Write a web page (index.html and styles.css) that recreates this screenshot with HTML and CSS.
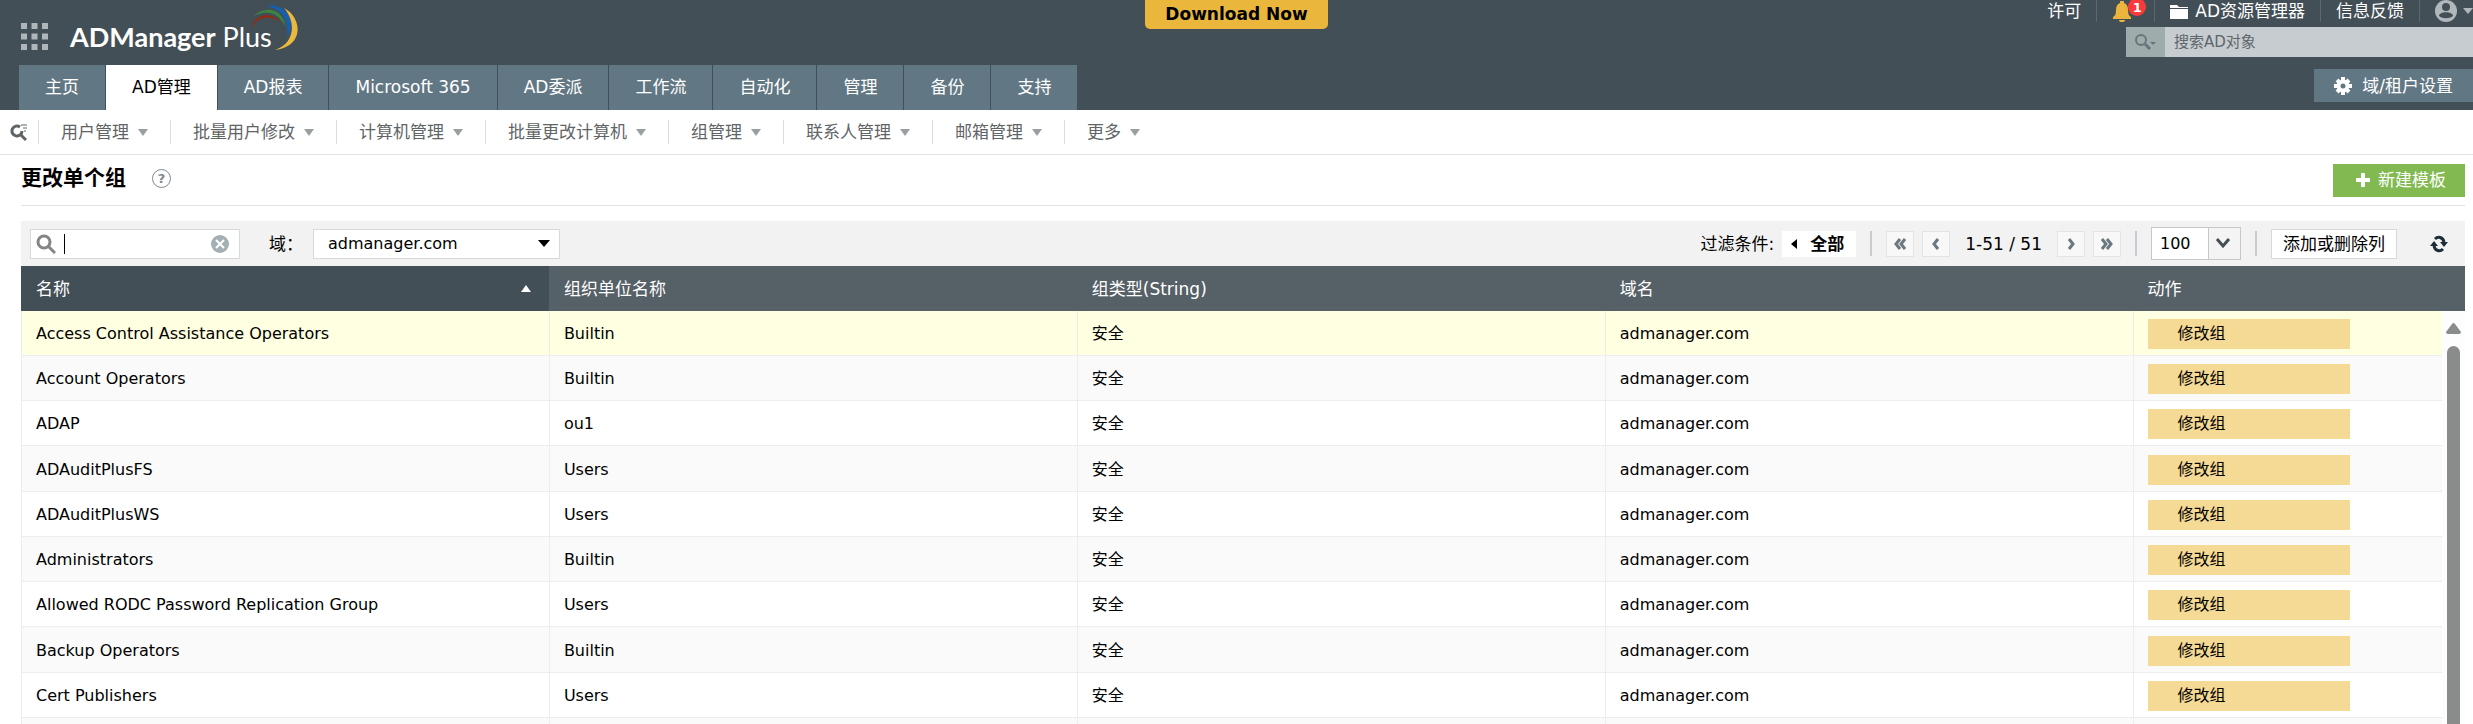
FILE: index.html
```html
<!DOCTYPE html>
<html lang="zh-CN">
    <head>
        <meta charset="UTF-8">
        <title>ADManager Plus</title>
        <link rel="stylesheet" href="styles.css">
    </head>

    <body>
        <header class="header">
            <div class="header-left">
                <div class="brand">
                    <button class="apps" aria-label="Apps">
                        <svg width="27" height="27" viewBox="0 0 27 27" fill="#aeb6b9">
                            <path d="M0 0h6v6H0zM10.500 0h6v6h-6zM21 0h6v6h-6zM0 10.500h6v6H0zM10.500 10.500h6v6h-6zM21 10.500h6v6h-6zM0 21h6v6H0zM10.500 21h6v6h-6zM21 21h6v6h-6z"/>
                        </svg>
                    </button>
                    <a class="logo" href="#"><b>ADManager</b> Plus
                        <svg class="swoosh" width="48" height="46" viewBox="0 0 48 46">
                            <path d="M0 23C3 11 19 4 30 18C19 9 8 12 2 20Z" fill="#98280f"/>
                            <path d="M3 11C13 1 31 2 35 22C27 7 16 4 3 11Z" fill="#3b8640"/>
                            <path d="M16 1C31-2 48 13 36 33C38 16 33 5 16 1Z" fill="#1560b0"/>
                            <path d="M33 3C52 13 53 42 24 45C43 39 46 18 33 3Z" fill="#ebb840"/>
                        </svg>
                    </a>
                </div>
                <nav class="tabs">
                    <a href="#">主页</a>
                    <a href="#" class="active">AD管理</a>
                    <a href="#">AD报表</a>
                    <a href="#">Microsoft 365</a>
                    <a href="#">AD委派</a>
                    <a href="#">工作流</a>
                    <a href="#">自动化</a>
                    <a href="#">管理</a>
                    <a href="#">备份</a>
                    <a href="#">支持</a>
                </nav>
            </div>

            <a class="download" href="#">Download Now</a>

            <div class="header-right">
                <div class="links">
                    <a href="#">许可</a>
                    <a href="#" class="bell" aria-label="Notifications">
                        <svg width="20" height="21" viewBox="0 0 20 21" fill="#ebb43c">
                            <path d="M8 0h4v2c3 1 4 4 4 7 0 4 1 6 3 7v2H1v-2c2-1 3-3 3-7 0-3 1-6 4-7zM7 19h6c0 3-6 3-6 0z"/>
                        </svg>
                        <span class="badge">1</span>
                    </a>
                    <a href="#">
                        <svg width="18" height="15" viewBox="0 0 18 15" fill="#fff">
                            <path d="M0 1h7l2 2h9v1H0zM0 5h18v10H0z"/>
                        </svg>
                        AD资源管理器
                    </a>
                    <a href="#">信息反馈</a>
                    <a href="#" class="user" aria-label="Account">
                        <svg width="22" height="22" viewBox="0 0 22 22">
                            <circle cx="11" cy="11" r="11" fill="#b1b8bc"/>
                            <circle cx="11" cy="7" r="4" fill="#434f57"/>
                            <path d="M4 16c0-5 14-5 14 0-4 3-10 3-14 0z" fill="#434f57"/>
                        </svg>
                        <svg width="10" height="6" viewBox="0 0 10 6" fill="#b1b8bc"><path d="M0 0h10L5 6z"/></svg>
                    </a>
                </div>
                <div class="object-search">
                    <button aria-label="Search type">
                        <svg width="22" height="16" viewBox="0 0 22 16" fill="none" stroke="#67757a" stroke-width="2">
                            <circle cx="6" cy="6" r="5"/>
                            <path d="M10 10l5 5" stroke-width="3"/>
                            <path d="M15 8h6l-3 3z" fill="#67757a" stroke="none"/>
                        </svg>
                    </button>
                    <input type="text" placeholder="搜索AD对象" aria-label="搜索AD对象">
                </div>
                <button class="settings">
                    <svg width="18" height="18" viewBox="0 0 18 18">
                        <circle cx="9" cy="9" r="4.500" fill="none" stroke="#fff" stroke-width="4"/>
                        <path d="M9 0v4M9 14v4M0 9h4M14 9h4M3 3l2 2M13 13l2 2M15 3l-2 2M5 13l-2 2" stroke="#fff" stroke-width="4"/>
                    </svg>
                    域/租户设置
                </button>
            </div>
        </header>

        <nav class="subnav">
            <a href="#" class="find" aria-label="Find">
                <svg width="17" height="17" viewBox="0 0 17 17" fill="none" stroke="#5f6466">
                    <path d="M10 3a5 5 0 1 0 2 4" stroke-width="3"/>
                    <path d="M10 10l6 6" stroke-width="3"/>
                    <path d="M11 1h6M13 4h4M14 7h2" stroke-width="1"/>
                </svg>
            </a>
            <a href="#">用户管理<i class="caret"></i></a>
            <a href="#">批量用户修改<i class="caret"></i></a>
            <a href="#">计算机管理<i class="caret"></i></a>
            <a href="#">批量更改计算机<i class="caret"></i></a>
            <a href="#">组管理<i class="caret"></i></a>
            <a href="#">联系人管理<i class="caret"></i></a>
            <a href="#">邮箱管理<i class="caret"></i></a>
            <a href="#">更多<i class="caret"></i></a>
        </nav>

        <main class="content">
            <div class="title-bar">
                <h1>更改单个组</h1>
                <a href="#" class="help" aria-label="Help">?</a>
                <button class="new-template">
                    <svg width="14" height="14" viewBox="0 0 14 14" fill="#fff"><path d="M5 0h4v5h5v4H9v5H5V9H0V5h5z"/></svg>
                    新建模板
                </button>
            </div>

            <div class="toolbar">
                <div class="search-box">
                    <svg width="20" height="20" viewBox="0 0 20 20" fill="none" stroke="#858585" stroke-width="3">
                        <circle cx="8" cy="8" r="6"/>
                        <path d="M12 12l7 7"/>
                    </svg>
                    <span class="cursor"></span>
                    <input type="text" aria-label="搜索">
                    <button aria-label="Clear">
                        <svg width="18" height="18" viewBox="0 0 18 18">
                            <circle cx="9" cy="9" r="9" fill="#a4b0b3"/>
                            <path d="M5 5l8 8M13 5l-8 8" stroke="#fff" stroke-width="2"/>
                        </svg>
                    </button>
                </div>
                <label class="domain-label" for="domain">域：</label>
                <select class="domain" id="domain">
                    <option>admanager.com</option>
                </select>

                <div class="toolbar-right">
                    <span>过滤条件:</span>
                    <button class="filter">
                        <svg width="6" height="10" viewBox="0 0 6 10"><path d="M6 0v10L0 5z"/></svg>
                        全部
                    </button>
                    <span class="divider"></span>
                    <div class="pager">
                        <button aria-label="First"><svg width="12" height="12" viewBox="0 0 12 12"><path d="M6 1L2 6l4 5M11 1L7 6l4 5"/></svg></button>
                        <button aria-label="Previous"><svg width="12" height="12" viewBox="0 0 12 12"><path d="M8 1L4 6l4 5"/></svg></button>
                        <span>1-51 / 51</span>
                        <button aria-label="Next"><svg width="12" height="12" viewBox="0 0 12 12"><path d="M4 1l4 5-4 5"/></svg></button>
                        <button aria-label="Last"><svg width="12" height="12" viewBox="0 0 12 12"><path d="M1 1l4 5-4 5M6 1l4 5-4 5"/></svg></button>
                    </div>
                    <span class="divider"></span>
                    <select class="page-size" aria-label="Page size">
                        <option>100</option>
                    </select>
                    <span class="divider"></span>
                    <button class="columns-button">添加或删除列</button>
                    <button class="refresh" aria-label="Refresh">
                        <svg width="18" height="18" viewBox="0 0 18 18">
                            <path d="M5 4c3-3 8-2 9 3M13 14c-3 3-8 2-9-3" fill="none" stroke="#1d2d38" stroke-width="3"/>
                            <path d="M10 7h8l-4 5zM0 11h8L4 6z" fill="#1d2d38"/>
                        </svg>
                    </button>
                </div>
            </div>

            <div class="table-wrap">
                <table>
                    <thead>
                        <tr>
                            <th class="sorted">名称</th>
                            <th>组织单位名称</th>
                            <th>组类型(String)</th>
                            <th>域名</th>
                            <th class="action">动作</th>
                        </tr>
                    </thead>
                    <tbody>
                        <tr class="hover"><td>Access Control Assistance Operators</td><td>Builtin</td><td>安全</td><td>admanager.com</td><td class="action"><button>修改组</button></td></tr>
                        <tr><td>Account Operators</td><td>Builtin</td><td>安全</td><td>admanager.com</td><td class="action"><button>修改组</button></td></tr>
                        <tr><td>ADAP</td><td>ou1</td><td>安全</td><td>admanager.com</td><td class="action"><button>修改组</button></td></tr>
                        <tr><td>ADAuditPlusFS</td><td>Users</td><td>安全</td><td>admanager.com</td><td class="action"><button>修改组</button></td></tr>
                        <tr><td>ADAuditPlusWS</td><td>Users</td><td>安全</td><td>admanager.com</td><td class="action"><button>修改组</button></td></tr>
                        <tr><td>Administrators</td><td>Builtin</td><td>安全</td><td>admanager.com</td><td class="action"><button>修改组</button></td></tr>
                        <tr><td>Allowed RODC Password Replication Group</td><td>Users</td><td>安全</td><td>admanager.com</td><td class="action"><button>修改组</button></td></tr>
                        <tr><td>Backup Operators</td><td>Builtin</td><td>安全</td><td>admanager.com</td><td class="action"><button>修改组</button></td></tr>
                        <tr><td>Cert Publishers</td><td>Users</td><td>安全</td><td>admanager.com</td><td class="action"><button>修改组</button></td></tr>
                        <tr><td></td><td></td><td></td><td></td><td class="action"></td></tr>
                    </tbody>
                </table>
                <div class="scrollbar">
                    <svg width="15" height="11" viewBox="0 0 15 11" fill="#8a8c8b"><path d="M6 1q1.500-2 3 0l6 8q0 2-2 2H2q-2 0-2-2z"/></svg>
                    <div class="thumb"></div>
                </div>
            </div>
        </main>
    </body>
</html>
```
FILE: styles.css
```css
* {
    box-sizing: border-box;
}
body {
    margin: 0;
    height: 100vh;
    display: flex;
    flex-direction: column;
    overflow: hidden;
    background: #fff;
    color: #000;
    font-family: "DejaVu Sans", "Noto Sans CJK SC", sans-serif;
    font-size: 17px;
    line-height: 24px;
}
a {
    color: inherit;
    text-decoration: none;
}
button, input, select {
    font: inherit;
    color: inherit;
    border: 0;
    padding: 0;
    margin: 0;
    background: none;
    border-radius: 0;
}
button {
    display: flex;
    align-items: center;
    cursor: pointer;
    white-space: nowrap;
}
input {
    outline: none;
    min-width: 0;
}
svg {
    flex: none;
}

/* Header */
.header {
    display: grid;
    grid-template-columns: 1fr auto 1fr;
    align-items: start;
    background: #434f57;
    color: #fff;
}
.brand {
    display: flex;
    height: 65px;
    padding: 8px 21px 0;
    align-items: center;
    gap: 22px;
}
.logo {
    position: relative;
    font-family: Lato, sans-serif;
    font-size: 27px;
    white-space: nowrap;
}
.swoosh {
    position: absolute;
    left: 181px;
    top: -20px;
}
.tabs {
    display: flex;
    padding-left: 19px;
}
.tabs a {
    padding: 0 26px;
    line-height: 45px;
    background: #627784;
    border-right: 1px solid #434f57;
    white-space: nowrap;
}
.tabs .active {
    background: #fff;
    color: #000;
}
.download {
    padding: 2px 20px 3px;
    background: #eab73c;
    color: #000;
    font-weight: bold;
    border-radius: 0 0 5px 5px;
}
.header-right {
    display: flex;
    flex-direction: column;
    align-items: flex-end;
}
.links {
    display: flex;
    height: 22px;
    margin-bottom: 5px;
}
.links a {
    display: flex;
    align-items: center;
    gap: 7px;
    padding: 0 15px;
    border-left: 1px solid #5c676e;
    white-space: nowrap;
}
.links a:first-child {
    border-left: 0;
}
.links .bell {
    position: relative;
    padding-right: 22px;
}
.badge {
    position: absolute;
    left: 31px;
    top: -2px;
    width: 18px;
    height: 18px;
    border-radius: 50%;
    background: #f93a3a;
    font-size: 13px;
    font-weight: bold;
    line-height: 19px;
    text-align: center;
}
.links .user {
    gap: 6px;
    padding-right: 0;
}
.object-search {
    display: flex;
    width: 347px;
    height: 30px;
    background: #c7ccd1;
}
.object-search button {
    width: 39px;
    justify-content: center;
    background: #9eadac;
}
.object-search input {
    flex: 1;
    padding-left: 9px;
    font-size: 15px;
}
.object-search input::placeholder {
    color: #5f666b;
}
.settings {
    gap: 10px;
    height: 33px;
    margin-top: 12px;
    padding: 0 20px;
    background: #627784;
}

/* Sub navigation */
.subnav {
    display: flex;
    align-items: center;
    height: 45px;
    border-bottom: 1px solid #e3e3e3;
    color: #5f6466;
}
.subnav a {
    display: flex;
    align-items: center;
    gap: 9px;
    padding: 0 22px;
    border-left: 1px solid #ddd;
    white-space: nowrap;
}
.subnav .find {
    padding: 0 11px 0 10px;
    border: 0;
}
.caret {
    border: 5px solid transparent;
    border-top: 7px solid #999ea1;
    border-bottom: 0;
}

/* Page title */
.content {
    flex: 1;
    min-height: 0;
    display: flex;
    flex-direction: column;
    padding: 0 8px 0 21px;
}
.title-bar {
    display: flex;
    align-items: center;
    height: 51px;
    margin-bottom: 15px;
    border-bottom: 1px solid #e3e3e3;
}
h1 {
    margin: 0;
    padding-bottom: 4px;
    font-size: 21px;
}
.help {
    width: 19px;
    height: 19px;
    margin-left: 26px;
    margin-bottom: 4px;
    border: 1px solid #7f888c;
    border-radius: 50%;
    color: #7f888c;
    font-size: 13px;
    font-weight: bold;
    line-height: 17px;
    text-align: center;
}
.new-template {
    gap: 8px;
    height: 33px;
    margin-left: auto;
    padding: 0 19px 0 23px;
    background: #82ba51;
    color: #fff;
}

/* Toolbar */
.toolbar {
    display: flex;
    align-items: center;
    height: 45px;
    padding: 0 9px;
    background: #f2f2f2;
}
.search-box {
    display: flex;
    align-items: center;
    width: 210px;
    height: 30px;
    padding: 0 10px 0 5px;
    border: 1px solid #d6dada;
    background: #fff;
}
.search-box input {
    flex: 1;
}
.cursor {
    width: 1px;
    height: 20px;
    margin-left: 8px;
    background: #000;
}
.domain-label {
    width: 44px;
    margin-left: 29px;
    white-space: nowrap;
}
.domain, .page-size {
    appearance: none;
    cursor: pointer;
    background-color: #fff;
    background-repeat: no-repeat;
}
.domain {
    width: 247px;
    height: 30px;
    padding: 0 14px;
    border: 1px solid #d6dada;
    font-size: 16px;
    background-image: url("data:image/svg+xml,%3Csvg xmlns='http://www.w3.org/2000/svg' width='12' height='7'%3E%3Cpath d='M0 0h12L6 7z'/%3E%3C/svg%3E");
    background-position: right 9px center;
}
.toolbar-right {
    display: flex;
    align-items: center;
    margin-left: auto;
    padding-right: 8px;
    white-space: nowrap;
}
.filter {
    gap: 13px;
    height: 26px;
    margin-left: 8px;
    padding: 0 12px 0 9px;
    background: #fff;
    font-weight: bold;
}
.divider {
    width: 2px;
    height: 25px;
    margin: 0 14px;
    background: #c6ccd1;
}
.pager {
    display: flex;
    align-items: center;
    gap: 8px;
}
.pager button {
    width: 28px;
    height: 26px;
    justify-content: center;
    border: 1px solid #e4e4e4;
    background: #f8f8f8;
}
.pager svg {
    fill: none;
    stroke: #6b7880;
    stroke-width: 3;
}
.pager span {
    padding: 0 7px;
}
.page-size {
    width: 90px;
    height: 33px;
    padding: 0 8px;
    border: 1px solid #c3c8ca;
    font-size: 16px;
    background-image: url("data:image/svg+xml,%3Csvg xmlns='http://www.w3.org/2000/svg' width='32' height='31'%3E%3Cpath d='M0 0h32v31H0z' fill='%23f4f4f4'/%3E%3Cpath d='M0 0v31' stroke='%23c3c8ca' stroke-width='2'/%3E%3Cpath d='M9 11l6 7 6-7' fill='none' stroke='%23434f57' stroke-width='3'/%3E%3C/svg%3E");
    background-position: right center;
}
.columns-button {
    height: 30px;
    padding: 0 11px;
    border: 1px solid #d6dada;
    background: #fff;
}
.refresh {
    margin-left: 33px;
}

/* Table */
.table-wrap {
    position: relative;
    flex: 1;
    min-height: 0;
    overflow: hidden;
}
table {
    width: 100%;
    table-layout: fixed;
    border-collapse: separate;
    border-spacing: 0;
}
th, td {
    height: 45px;
    padding: 0 15px;
    text-align: left;
}
th {
    width: 21.6%;
    background: #566067;
    color: #fff;
    font-weight: normal;
}
th.action {
    width: auto;
}
th.sorted {
    background-color: #434f57;
    background-image: url("data:image/svg+xml,%3Csvg xmlns='http://www.w3.org/2000/svg' width='10' height='7'%3E%3Cpath d='M0 7h10L5 0z' fill='white'/%3E%3C/svg%3E");
    background-repeat: no-repeat;
    background-position: right 18px center;
}
td {
    padding: 2px 14px 0;
    border-left: 1px solid #ededed;
    border-bottom: 1px solid #ededed;
    font-size: 16px;
}
tbody tr:nth-child(4n) td {
    height: 46px;
}
tbody tr:nth-child(even) {
    background: #fafafa;
}
tbody tr.hover {
    background: #ffffe1;
}
td button {
    width: 202px;
    height: 30px;
    padding-left: 30px;
    background: #f4da94;
}
.scrollbar {
    position: absolute;
    top: 45px;
    right: 0;
    bottom: 0;
    width: 23px;
    display: flex;
    flex-direction: column;
    align-items: center;
    gap: 12px;
    padding-top: 12px;
    background: #fdfdfd;
}
.thumb {
    flex: 1;
    width: 13px;
    border-radius: 7px 7px 0 0;
    background: #8a8c8b;
}
```
